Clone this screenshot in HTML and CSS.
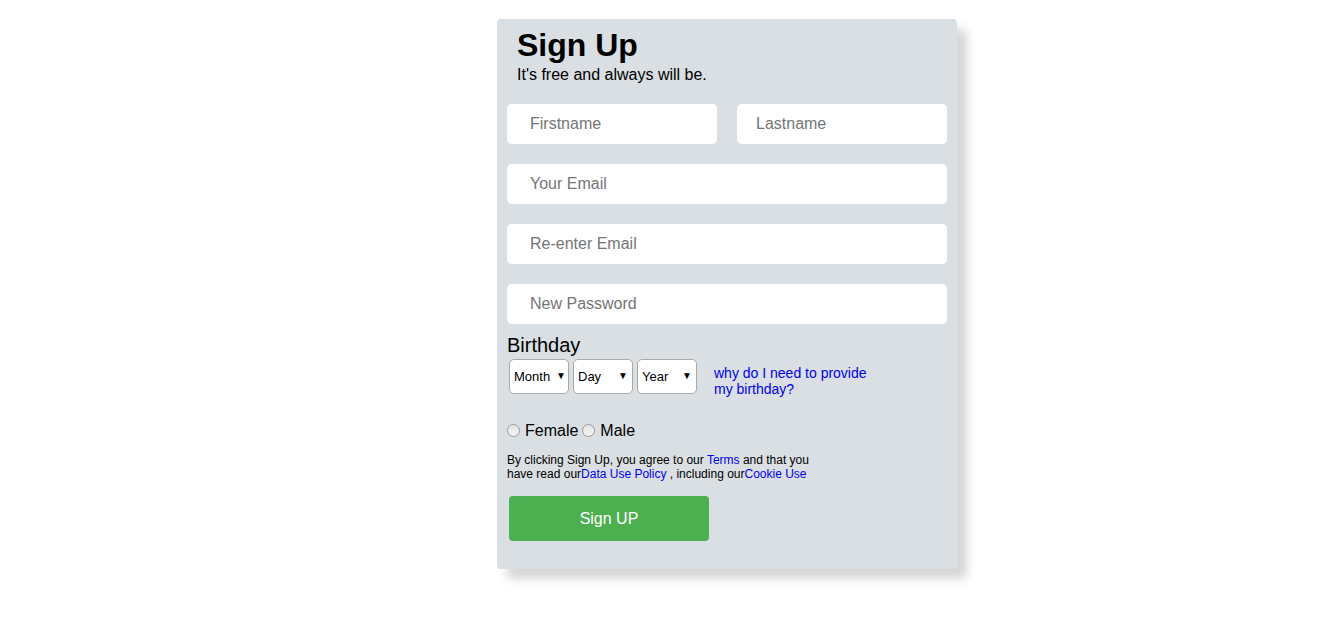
FILE: index.html
```html
<!DOCTYPE html>
<html>
<head>
<meta charset="utf-8">
<link rel="stylesheet" href="styles.css">
</head>
<body>
<div class="page">
  <form class="card">
    <div class="head">
      <h1 class="title">Sign Up</h1>
      <p class="sub">It's free and always will be.</p>
    </div>
    <div class="row">
      <input class="field first" type="text" placeholder="Firstname">
      <input class="field last" type="text" placeholder="Lastname">
    </div>
    <input class="field" type="email" placeholder="Your Email">
    <input class="field" type="email" placeholder="Re-enter Email">
    <input class="field" type="password" placeholder="New Password">
    <div class="bday-label">Birthday</div>
    <div class="bday-row">
      <span class="sel"><select class="month"><option>Month</option></select></span>
      <span class="sel"><select class="day"><option>Day</option></select></span>
      <span class="sel"><select class="year"><option>Year</option></select></span>
      <a class="why" href="#">why do I need to provide my birthday?</a>
    </div>
    <div class="gender">
      <label class="opt"><input type="radio" name="g" class="radio"> Female</label>
      <label class="opt"><input type="radio" name="g" class="radio"> Male</label>
    </div>
    <p class="terms">By clicking Sign Up, you agree to our <a href="#">Terms</a> and that you have read our<a href="#">Data Use Policy</a> , including our<a href="#">Cookie Use</a></p>
    <button type="button" class="btn">Sign UP</button>
  </form>
</div>
</body>
</html>
```

FILE: styles.css
```css
* { box-sizing: border-box; }
html, body { margin: 0; padding: 0; background: #fff; }
body { font-family: "Liberation Sans", Arial, sans-serif; color: #000; min-height: 641px; }
.page { display: flex; justify-content: center; align-items: flex-start; padding-top: 19px; padding-left: 116px; }
.card {
  width: 460px;
  background: #d9dfe2;
  border-radius: 4px;
  padding: 8px 10px 28px 10px;
  display: flex;
  flex-direction: column;
  box-shadow: 10px 10px 10px rgba(0,0,0,0.16);
}
.head { padding-left: 10px; margin-bottom: 20px; }
.title { font-size: 32px; font-weight: bold; margin: 0; line-height: 37px; }
.sub { font-size: 16px; margin: 2px 0 0 0; line-height: 18px; }
.row { display: flex; gap: 20px; margin-bottom: 20px; }
.row .field { width: 210px; margin-bottom: 0; }
.field {
  height: 40px;
  width: 440px;
  border: none;
  border-radius: 5px;
  background: #fff;
  padding: 0 0 0 23px;
  font-family: "Liberation Sans", Arial, sans-serif;
  font-size: 16px;
  margin: 0 0 20px 0;
  outline: none;
}
.field.last { padding-left: 19px; }
.field::placeholder { color: #757575; }
input[type="password"].field { margin-bottom: 10px; }
.bday-label { font-size: 20px; line-height: 23px; margin-bottom: 2px; }
.bday-row { display: flex; align-items: flex-start; padding-left: 2px; }
.sel { position: relative; margin-right: 4px; display: block; }
.sel select {
  -webkit-appearance: none;
  appearance: none;
  width: 60px;
  height: 35px;
  border: 1px solid #a9a9a9;
  border-radius: 5px;
  background: #fff;
  font-family: "Liberation Sans", Arial, sans-serif;
  font-size: 13px;
  color: #000;
  padding: 0 0 0 4px;
  outline: none;
}
.sel::after {
  content: "▼";
  position: absolute;
  right: 5px;
  top: 11px;
  font-size: 10px;
  pointer-events: none;
}
.sel:first-child::after { right: 3px; }
.why {
  margin-left: 13px;
  margin-top: 6px;
  width: 160px;
  font-size: 14px;
  line-height: 16px;
  color: #0000ee;
  text-decoration: none;
}
.gender { display: flex; align-items: center; margin-top: 25px; font-size: 16px; line-height: 18px; }
.opt { display: flex; align-items: center; }
.radio {
  -webkit-appearance: none;
  appearance: none;
  margin: 0 5px 0 0;
  width: 13px;
  height: 13px;
  border: 1px solid #9a9a9a;
  border-radius: 50%;
  background: linear-gradient(#e4e4e4, #f4f4f4);
  position: relative;
  top: -1px;
}
.opt + .opt .radio { margin-left: 4px; }
.terms { font-size: 12px; line-height: 14px; margin: 13px 0 0 0; width: 320px; }
.terms a { color: #0000ee; text-decoration: none; }
.btn {
  margin-top: 15px;
  margin-left: 2px;
  width: 200px;
  height: 45px;
  border: none;
  border-radius: 4px;
  background: #4caf50;
  color: #fff;
  font-family: "Liberation Sans", Arial, sans-serif;
  font-size: 16px;
}
```
